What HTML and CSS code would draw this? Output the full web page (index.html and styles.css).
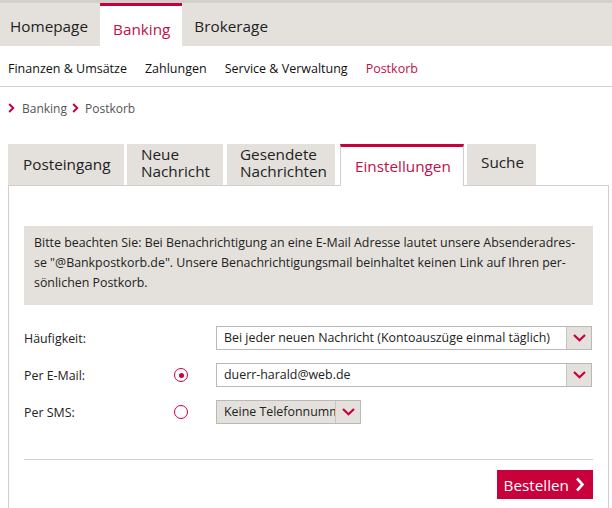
FILE: index.html
```html
<!DOCTYPE html>
<html lang="de">
<head>
<meta charset="utf-8">
<title>Postkorb</title>
<link rel="stylesheet" href="styles.css">
</head>
<body>
<nav class="topnav">
  <a class="topnav-item first">Homepage</a>
  <a class="topnav-item active">Banking</a>
  <a class="topnav-item">Brokerage</a>
</nav>
<nav class="subnav">
  <a class="subnav-item">Finanzen &amp; Umsätze</a>
  <a class="subnav-item">Zahlungen</a>
  <a class="subnav-item">Service &amp; Verwaltung</a>
  <a class="subnav-item current">Postkorb</a>
</nav>
<div class="breadcrumb">
  <svg class="crumb-chev" width="7" height="10" viewBox="0 0 7 10"><path d="M1.2 1 L5.2 5 L1.2 9" fill="none" stroke="#c8003c" stroke-width="2"/></svg>
  <span>Banking</span>
  <svg class="crumb-chev second" width="7" height="10" viewBox="0 0 7 10"><path d="M1.2 1 L5.2 5 L1.2 9" fill="none" stroke="#c8003c" stroke-width="2"/></svg>
  <span>Postkorb</span>
</div>
<main class="main">
  <div class="tabs">
    <div class="tab t1">Posteingang</div>
    <div class="tab t2">Neue<br>Nachricht</div>
    <div class="tab t3">Gesendete<br>Nachrichten</div>
    <div class="tab t4 active">Einstellungen</div>
    <div class="tab t5">Suche</div>
  </div>
  <section class="panel">
    <div class="notice">Bitte beachten Sie: Bei Benachrichtigung an eine E-Mail Adresse lautet unsere Absenderadres-<br>se "@Bankpostkorb.de". Unsere Benachrichtigungsmail beinhaltet keinen Link auf Ihren per-<br>sönlichen Postkorb.</div>
    <div class="form">
      <div class="label">Häufigkeit:</div>
      <div class="radio-cell"></div>
      <div class="select wide">
        <span class="select-text">Bei jeder neuen Nachricht (Kontoauszüge einmal täglich)</span>
        <span class="select-btn"><svg width="13" height="8" viewBox="0 0 13 8"><path d="M1 1 L6.5 6.2 L12 1" fill="none" stroke="#c8003c" stroke-width="2.2"/></svg></span>
      </div>

      <div class="label">Per E-Mail:</div>
      <div class="radio-cell"><span class="radio checked"></span></div>
      <div class="select wide">
        <span class="select-text">duerr-harald@web.de</span>
        <span class="select-btn"><svg width="13" height="8" viewBox="0 0 13 8"><path d="M1 1 L6.5 6.2 L12 1" fill="none" stroke="#c8003c" stroke-width="2.2"/></svg></span>
      </div>

      <div class="label">Per SMS:</div>
      <div class="radio-cell"><span class="radio"></span></div>
      <div class="select narrow disabled">
        <span class="select-text">Keine Telefonnummer</span>
        <span class="select-btn"><svg width="13" height="8" viewBox="0 0 13 8"><path d="M1 1 L6.5 6.2 L12 1" fill="none" stroke="#c8003c" stroke-width="2.2"/></svg></span>
      </div>
    </div>
    <hr class="divider">
    <div class="actions">
      <button class="btn">Bestellen <svg width="10" height="15" viewBox="0 0 10 15"><path d="M2 1.5 L7.5 7.5 L2 13.5" fill="none" stroke="#fff" stroke-width="2.6"/></svg></button>
    </div>
  </section>
</main>
</body>
</html>
```
FILE: styles.css
```css
* { box-sizing: border-box; }
body {
  margin: 0;
  font-family: "Open Sans", "Noto Sans", sans-serif;
  color: #222;
  background: #fff;
  overflow: hidden;
}
a { text-decoration: none; color: inherit; }

.topnav {
  display: flex;
  height: 46px;
  background: #e4e1dc;
  border-top: 3px solid #d3cfca;
}
.topnav-item {
  padding: 13px 12px 0;
  font-size: 15.3px;
  color: #222;
  height: 43px;
}
.topnav-item.first { padding-left: 10px; padding-right: 12px; }
.topnav-item.active {
  background: #fff;
  border-top: 3px solid #c8003c;
  color: #c0104a;
  padding-left: 13px;
  padding-right: 12px;
}

.subnav {
  display: flex;
  gap: 18px;
  height: 41px;
  align-items: center;
  padding: 5px 8px 0;
  border-bottom: 1px solid #cfcfcf;
  font-size: 12.5px;
}
.subnav-item { color: #111; }
.subnav-item.current { color: #c0104a; }

.breadcrumb {
  display: flex;
  align-items: center;
  gap: 4px;
  padding: 9px 8px 0 8px;
  height: 33px;
  font-size: 12px;
  color: #555;
}
.crumb-chev { margin-right: 3px; }
.crumb-chev.second { margin-left: 1px; margin-right: 2px; }

.main {
  padding: 24px 0 0 8px;
  width: 609px;
}
.tabs {
  display: flex;
  align-items: flex-start;
  height: 42px;
  position: relative;
  z-index: 1;
}
.tab {
  height: 41px;
  background: #e4e1dc;
  font-size: 15.3px;
  line-height: 17px;
  color: #222;
  display: flex;
  align-items: center;
  padding: 0 14px;
  margin-right: 3px;
  white-space: nowrap;
}
.tab.t1 { width: 116px; padding-left: 15px; }
.tab.t2 { width: 96px; margin-right: 4px; padding-right: 6px; padding-bottom: 4px; }
.tab.t3 { width: 108px; margin-right: 5px; padding-left: 13px; padding-right: 6px; padding-bottom: 4px; }
.tab.t4 { width: 124px; }
.tab.t5 { width: 69px; padding-bottom: 4px; }
.tab.active {
  height: 42px;
  background: #fff;
  border-top: 3px solid #c8003c;
  border-left: 1px solid #cfcfcf;
  border-right: 1px solid #cfcfcf;
  color: #c0104a;
  padding-left: 14px;
  margin-right: 3px;
}

.panel {
  border: 1px solid #cfcfcf;
  border-bottom: none;
  margin-top: -1px;
  padding: 40px 15px 40px 15px;
  min-height: 330px;
}
.notice {
  background: #e4e1dc;
  padding: 7px 10px 12px;
  font-size: 12.4px;
  line-height: 20px;
  color: #222;
  white-space: nowrap;
}

.form {
  display: grid;
  grid-template-columns: 150px 42px 376px;
  grid-auto-rows: 24px;
  row-gap: 13px;
  align-items: center;
  margin-top: 21px;
  font-size: 12.4px;
}
.label { color: #222; }
.radio-cell { display: flex; align-items: center; }
.radio {
  width: 14px;
  height: 14px;
  border: 1.5px solid #c8003c;
  border-radius: 50%;
  display: flex;
  align-items: center;
  justify-content: center;
}
.radio.checked::after {
  content: "";
  width: 5px;
  height: 5px;
  border-radius: 50%;
  background: #c8003c;
}
.select {
  display: flex;
  height: 24px;
  border: 1px solid #b9b9b9;
  background: #fff;
}
.select.wide { width: 376px; }
.select.narrow { width: 145px; background: #e4e1dc; }
.select-text {
  flex: 1;
  min-width: 0;
  padding: 0 0 0 7px;
  line-height: 22px;
  white-space: nowrap;
  overflow: hidden;
  color: #222;
}
.select-btn {
  width: 25px;
  flex: none;
  background: #e4e1dc;
  border-left: 1px solid #c9c6c1;
  display: flex;
  align-items: center;
  justify-content: center;
}

.divider {
  border: none;
  border-top: 1px solid #cfcfcf;
  margin: 35px 0 0 0;
}
.actions {
  display: flex;
  justify-content: flex-end;
  margin-top: 10px;
}
.btn {
  display: flex;
  align-items: center;
  gap: 6px;
  height: 29px;
  padding: 0 8px 0 7px;
  background: #c8003c;
  color: #fff;
  border: none;
  font-family: inherit;
  font-size: 15.3px;
}
```
